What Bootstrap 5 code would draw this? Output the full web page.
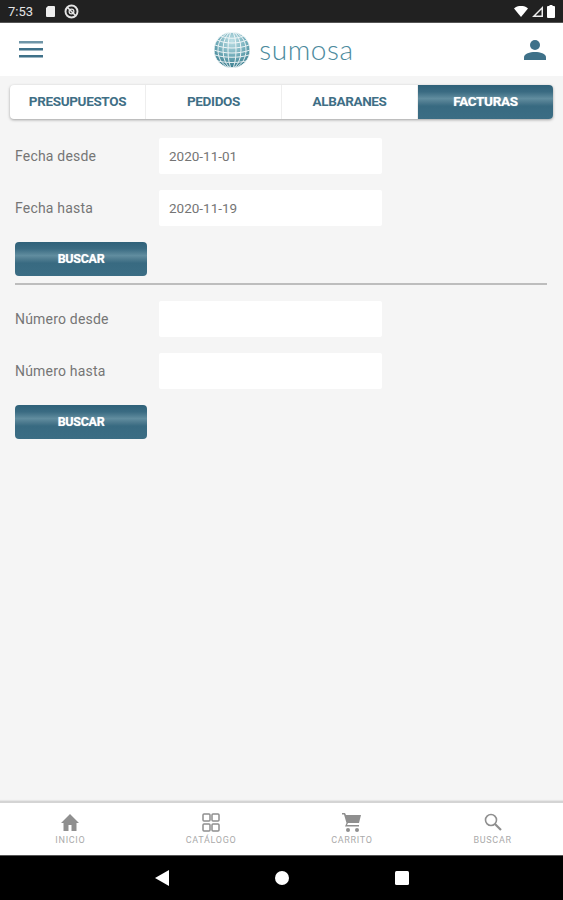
<!DOCTYPE html>
<html lang="es">
<head>
    <meta charset="UTF-8">
    <meta name="viewport" content="width=device-width, initial-scale=1.0">
    <title>Sumosa</title>
    <link href="https://cdn.jsdelivr.net/npm/bootstrap@5.3.0/dist/css/bootstrap.min.css" rel="stylesheet">
    <style>
        html, body { height: 100%; }
        body {
            font-family: Roboto, "Liberation Sans", sans-serif;
            background-color: #f5f5f5;
            color: #666;
            overflow: hidden;
        }
        .app-shell { height: 900px; }
        /* Barra de estado */
        .status-strip {
            height: 23px;
            background-color: #212121;
            color: #e4e4e4;
            font-size: 13px;
            padding: 1px 8px 0 8px;
            border-bottom: 1px solid #555;
        }
        .status-sd { margin-left: 12px; }
        /* Cabecera */
        .top-head {
            height: 53px;
            background-color: #fff;
            padding: 0 16px 0 18px;
        }
        .brand-word {
            font-family: Lato, "Open Sans", sans-serif;
            font-weight: 300;
            font-size: 28px;
            letter-spacing: .6px;
            color: #4b8a9d;
            line-height: 1;
            margin-left: 8px;
            padding-bottom: 2px;
        }
        /* Pestañas */
        .tab-strip {
            margin: 9px 10px 0 10px;
            height: 34px;
            background-color: #fff;
            border-radius: 4px;
            box-shadow: 0 1px 3px rgba(0, 0, 0, .35);
        }
        .tab-item {
            flex: 1 1 0;
            font-size: 13.5px;
            font-weight: 700;
            letter-spacing: -.35px;
            color: #3f6f86;
            text-transform: uppercase;
            border-right: 1px solid #eee;
            padding-bottom: 2px;
        }
        .glossy {
            background: linear-gradient(#2f6179 0, #3a6b82 20%, #618d9f 40%, #4f7c90 50%, #386a81 62%, #3b6d84 100%);
            color: #fff;
            text-shadow: 0 0 1px rgba(255, 255, 255, .6);
        }
        .tab-item.glossy { border-right: 0; border-radius: 0 4px 4px 0; }
        /* Formulario */
        .form-zone { padding: 19px 16px 0 15px; }
        .field-line { height: 36px; margin-bottom: 16px; }
        .field-name { width: 144px; font-size: 14px; letter-spacing: .2px; color: #757575; padding-top: 1px; }
        .field-input {
            width: 223px;
            height: 36px;
            border: 0;
            border-radius: 2px;
            background-color: #fff;
            padding: 0 10px;
            font-size: 13.5px;
            color: #757575;
        }
        .search-btn {
            width: 132px;
            height: 34px;
            border: 0;
            border-radius: 4px;
            font-size: 12.5px;
            font-weight: 700;
            letter-spacing: -.3px;
            padding: 0;
        }
        .split-line {
            margin: 7px 0 16px;
            border: 0;
            border-top: 2px solid #bdbdbd;
            opacity: 1;
        }
        /* Barra inferior */
        .bottom-tabs {
            height: 54px;
            background-color: #fff;
            border-top: 2px solid #d4d4d4;
            box-shadow: 0 -1px 1px rgba(0, 0, 0, .06);
        }
        .bottom-item {
            flex: 1 1 0;
            font-size: 9px;
            letter-spacing: .7px;
            color: #aaa;
            line-height: 1;
            padding-top: 10px;
        }
        .bottom-item svg { margin-bottom: 4px; }
        .sys-nav {
            height: 45px;
            background-color: #000;
            border-top: 1px solid #555;
        }
        .sys-back, .sys-home { margin-right: 106px; }
    </style>
</head>
<body>

<div class="app-shell d-flex flex-column">

    <!-- Barra de estado -->
    <div class="status-strip d-flex align-items-center">
        <span>7:53</span>
        <svg class="status-sd" width="11" height="13" viewBox="0 0 11 13"><path d="M3 1h6a1 1 0 0 1 1 1v9a1 1 0 0 1-1 1H2a1 1 0 0 1-1-1V3z" fill="#eee"/></svg>
        <svg class="ms-2" width="15" height="15" viewBox="0 0 14 14" fill="none" stroke="#e4e4e4"><circle cx="7" cy="7" r="5.6" stroke-width="1.8"/><path d="M3 3l8 8" stroke-width="1.5"/><circle cx="7" cy="7" r="2.2" stroke-width="1.2"/></svg>
        <div class="ms-auto d-flex align-items-center gap-1">
            <svg width="14" height="11" viewBox="0 0 14 11"><path d="M0 2.5C4-1 10-1 14 2.5L7 11z" fill="#fff"/></svg>
            <svg width="11" height="11" viewBox="0 0 11 11"><path d="M11 0v11H0zM9.5 3.6L3.6 9.500h5.900z" fill="#eee" fill-rule="evenodd"/></svg>
            <svg width="8" height="13" viewBox="0 0 8 13"><path d="M2.500 0h3v1H7a1 1 0 0 1 1 1v10a1 1 0 0 1-1 1H1a1 1 0 0 1-1-1V2a1 1 0 0 1 1-1h1.500z" fill="#fff"/></svg>
        </div>
    </div>

    <!-- Cabecera -->
    <header class="top-head d-flex align-items-center justify-content-between">
        <svg width="26" height="20" viewBox="0 0 26 20"><g fill="#3f7189"><rect x="1" y="1" width="24" height="2.500" opacity=".75"/><rect x="1" y="8" width="24" height="2.500"/><rect x="1" y="15" width="24" height="2.500"/></g></svg>
        <div class="d-flex align-items-center">
            <svg width="38" height="38" viewBox="0 0 38 38">
                <defs><radialGradient id="bola" cx="50%" cy="25%" r="80%"><stop offset="0" stop-color="#bfe0e6"/><stop offset=".5" stop-color="#74aebb"/><stop offset="1" stop-color="#2f7486"/></radialGradient></defs>
                <circle cx="19" cy="19" r="18" fill="url(#bola)"/>
                <g fill="none" stroke="#fff" stroke-width="1" opacity=".85">
                    <ellipse cx="19" cy="19" rx="18" ry="18"/>
                    <ellipse cx="19" cy="19" rx="14" ry="18"/>
                    <ellipse cx="19" cy="19" rx="9" ry="18"/>
                    <ellipse cx="19" cy="19" rx="4" ry="18"/>
                    <path d="M8 5c6 3 16 3 22 0M4 9c8 4 22 4 30 0M2 14c10 4 24 4 34 0M1 19c10 4 26 4 36 0M2 24c10 3 24 3 34 0M5 30c8 2 20 2 28 0"/>
                </g>
            </svg>
            <span class="brand-word">sumosa</span>
        </div>
        <svg width="24" height="22" viewBox="0 0 24 22" fill="#3f7189"><circle cx="12" cy="6" r="5"/><path d="M1 21v-2.500C1 14.500 7 13 12 13s11 1.500 11 5.500V21z"/></svg>
    </header>

    <!-- Pestañas -->
    <nav class="tab-strip d-flex">
        <div class="tab-item d-flex align-items-center justify-content-center">Presupuestos</div>
        <div class="tab-item d-flex align-items-center justify-content-center">Pedidos</div>
        <div class="tab-item d-flex align-items-center justify-content-center">Albaranes</div>
        <div class="tab-item glossy d-flex align-items-center justify-content-center">Facturas</div>
    </nav>

    <!-- Formulario -->
    <main class="form-zone flex-grow-1">
        <div class="field-line d-flex align-items-center">
            <label class="field-name">Fecha desde</label>
            <input class="field-input" type="text" value="2020-11-01">
        </div>
        <div class="field-line d-flex align-items-center">
            <label class="field-name">Fecha hasta</label>
            <input class="field-input" type="text" value="2020-11-19">
        </div>
        <button class="search-btn glossy d-block" type="button">BUSCAR</button>
        <hr class="split-line">
        <div class="field-line d-flex align-items-center">
            <label class="field-name">Número desde</label>
            <input class="field-input" type="text">
        </div>
        <div class="field-line d-flex align-items-center">
            <label class="field-name">Número hasta</label>
            <input class="field-input" type="text">
        </div>
        <button class="search-btn glossy d-block" type="button">BUSCAR</button>
    </main>

    <!-- Barra inferior -->
    <div class="bottom-tabs d-flex">
        <div class="bottom-item d-flex flex-column align-items-center">
            <svg width="20" height="19" viewBox="0 0 20 19" fill="#8f8f8f"><path d="M10 1L1 10h2.500v8h5v-6h3v6h5v-8H19z"/></svg>
            <span>INICIO</span>
        </div>
        <div class="bottom-item d-flex flex-column align-items-center">
            <svg width="20" height="19" viewBox="0 0 20 19" fill="none" stroke="#8f8f8f" stroke-width="1.500"><rect x="2" y="1" width="7" height="7" rx="1"/><rect x="11" y="1" width="7" height="7" rx="1"/><rect x="2" y="11" width="7" height="7" rx="1"/><rect x="11" y="11" width="7" height="7" rx="1"/></svg>
            <span>CATÁLOGO</span>
        </div>
        <div class="bottom-item d-flex flex-column align-items-center">
            <svg width="20" height="19" viewBox="0 0 20 19" fill="#8f8f8f"><path d="M0 0h3l1 2h15l-2 8H6l-1 2h12v1.500H3L4.500 10 2 1.500H0z"/><circle cx="6" cy="17" r="2"/><circle cx="15" cy="17" r="2"/></svg>
            <span>CARRITO</span>
        </div>
        <div class="bottom-item d-flex flex-column align-items-center">
            <svg width="20" height="19" viewBox="0 0 20 19" fill="none" stroke="#8f8f8f"><circle cx="8" cy="7" r="5.500" stroke-width="1.600"/><path d="M12 11l6 6" stroke-width="2.200"/></svg>
            <span>BUSCAR</span>
        </div>
    </div>

    <!-- Navegación del sistema -->
    <div class="sys-nav d-flex align-items-center justify-content-center">
        <svg class="sys-back" width="14" height="16" viewBox="0 0 14 16"><path d="M14 0v16L0 8z" fill="#fff"/></svg>
        <svg class="sys-home" width="14" height="14" viewBox="0 0 14 14"><circle cx="7" cy="7" r="7" fill="#fff"/></svg>
        <svg width="14" height="14" viewBox="0 0 14 14"><rect width="14" height="14" rx="1.500" fill="#fff"/></svg>
    </div>
</div>

<script src="https://cdn.jsdelivr.net/npm/bootstrap@5.3.0/dist/js/bootstrap.bundle.min.js"></script>
</body>
</html>
